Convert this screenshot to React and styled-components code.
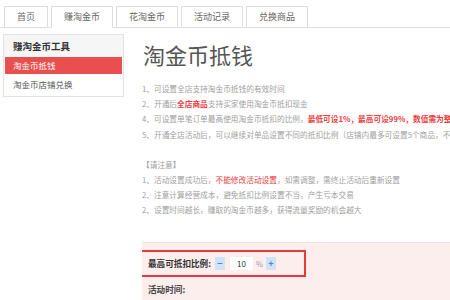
import React from 'react';
import styled, { createGlobalStyle } from 'styled-components';

const GlobalStyle = createGlobalStyle`
    html, body {
        margin: 0;
        padding: 0;
        background: #fff;
        overflow: hidden;
    }
    body {
        font-family: "Noto Sans CJK SC", "Noto Sans", sans-serif;
    }
`;

const Page = styled.div`
    width: 450px;
    height: 300px;
    overflow: hidden;
`;

const TabBar = styled.div`
    display: flex;
    align-items: flex-end;
    padding: 6px 0 0 4px;
    border-bottom: 1px solid #ddd;
    height: 21px;
`;

const Tab = styled.div`
    height: 20px;
    line-height: 20px;
    padding: 0 12px;
    margin-right: 3px;
    border: 1px solid #ddd;
    border-bottom: ${p => (p.$active ? '1px solid #fff' : 'none')};
    margin-bottom: ${p => (p.$active ? '-1px' : '0')};
    background: #fff;
    font-size: 9px;
    color: #666;
`;

const Body = styled.div`
    display: flex;
    align-items: flex-start;
    padding-left: 3px;
    margin-top: 6px;
`;

const Sidebar = styled.div`
    width: 119px;
    flex-shrink: 0;
    margin-right: 18px;
    border: 1px solid #e2e2e2;
    padding-bottom: 1px;
`;

const SideTitle = styled.div`
    height: 22px;
    line-height: 22px;
    padding-left: 9px;
    font-size: 9.5px;
    font-weight: bold;
    color: #333;
    background: #f6f6f6;
`;

const SideItem = styled.div`
    margin: 0 1px;
    height: ${p => (p.$active ? '17px' : '21px')};
    line-height: ${p => (p.$active ? '17px' : '21px')};
    padding-left: 8px;
    font-size: 8.5px;
    color: ${p => (p.$active ? '#fff' : '#555')};
    background: ${p => (p.$active ? '#e94f4f' : '#fff')};
`;

const Main = styled.div`
    flex: 1;
    min-width: 0;
    overflow: hidden;
`;

const Heading = styled.h1`
    margin: 5px 0 12px 1px;
    font-size: 22px;
    line-height: 30px;
    font-weight: normal;
    color: #555;
`;

const Lines = styled.div`
    margin-bottom: ${p => p.$gap || 0}px;
`;

const Line = styled.div`
    font-size: 7.7px;
    line-height: 15.2px;
    height: 15.2px;
    color: #a0a0a0;
    white-space: nowrap;
`;

const Red = styled.span`
    color: #f03c3c;
    font-weight: ${p => (p.$bold ? 'bold' : 'normal')};
`;

const Panel = styled.div`
    background: #fdeeee;
    border-top: 1px solid #f8dede;
    padding: 7px 0 20px 0;
`;

const Highlight = styled.div`
    display: flex;
    align-items: center;
    width: 156px;
    height: 23px;
    margin-left: -5px;
    padding-left: 9px;
    border: 2px solid #e53a3a;
`;

const FieldLabel = styled.span`
    font-size: 8.6px;
    font-weight: bold;
    color: #333;
    margin-right: 4px;
`;

const StepButton = styled.span`
    display: inline-flex;
    align-items: center;
    justify-content: center;
    width: 10px;
    height: 13px;
    background: #cfe2f6;
    color: #4f86c9;
    font-size: 9px;
    font-weight: bold;
`;

const NumberBox = styled.span`
    display: inline-flex;
    align-items: center;
    justify-content: center;
    width: 23px;
    height: 13px;
    margin: 0 3px 0 5px;
    background: #fff;
    font-size: 8px;
    color: #333;
`;

const Unit = styled.span`
    font-size: 7.5px;
    color: #999;
    margin-right: 3px;
`;

const FieldRow = styled.div`
    margin-top: 6px;
    padding-left: 6px;
    font-size: 8.6px;
    font-weight: bold;
    color: #444;
`;

const tabs = ['首页', '赚淘金币', '花淘金币', '活动记录', '兑换商品'];

const App = () => {
    return (
        <Page>
            <GlobalStyle />
            <TabBar>
                {tabs.map((t, i) => (
                    <Tab key={t} $active={i === 1}>{t}</Tab>
                ))}
            </TabBar>
            <Body>
                <Sidebar>
                    <SideTitle>赚淘金币工具</SideTitle>
                    <SideItem $active>淘金币抵钱</SideItem>
                    <SideItem>淘金币店铺兑换</SideItem>
                </Sidebar>
                <Main>
                    <Heading>淘金币抵钱</Heading>
                    <Lines $gap={15}>
                        <Line>1、可设置全店支持淘金币抵钱的有效时间</Line>
                        <Line>2、开通后<Red $bold>全店商品</Red>支持买家使用淘金币抵扣现金</Line>
                        <Line>4、可设置单笔订单最高使用淘金币抵扣的比例，<Red $bold>最低可设1%，最高可设99%，数值需为整数</Red></Line>
                        <Line>5、开通全店活动后，可以继续对单品设置不同的抵扣比例（店铺内最多可设置5个商品，不支持</Line>
                    </Lines>
                    <Lines $gap={24}>
                        <Line>【请注意】</Line>
                        <Line>1、活动设置成功后，<Red>不能修改活动设置</Red>，如需调整，需终止活动后重新设置</Line>
                        <Line>2、注意计算经营成本，避免抵扣比例设置不当，产生亏本交易</Line>
                        <Line>2、设置时间越长，赚取的淘金币越多，获得流量奖励的机会越大</Line>
                    </Lines>
                    <Panel>
                        <Highlight>
                            <FieldLabel>最高可抵扣比例:</FieldLabel>
                            <StepButton>−</StepButton>
                            <NumberBox>10</NumberBox>
                            <Unit>%</Unit>
                            <StepButton>+</StepButton>
                        </Highlight>
                        <FieldRow>活动时间:</FieldRow>
                    </Panel>
                </Main>
            </Body>
        </Page>
    );
};

export default App;
